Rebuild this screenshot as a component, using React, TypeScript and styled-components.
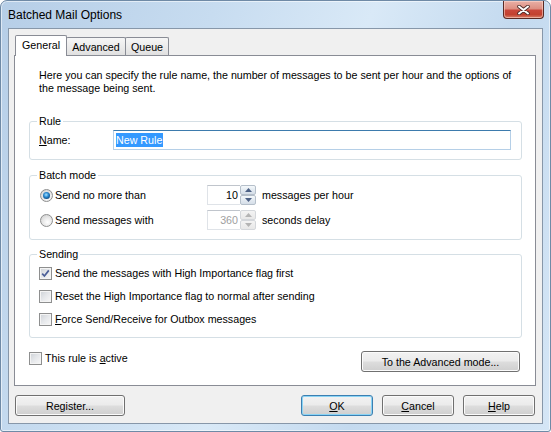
import React from "react";
import styled, { createGlobalStyle, css } from "styled-components";

const GlobalStyle = createGlobalStyle`
  html, body {
    margin: 0;
    padding: 0;
    background: #ffffff;
  }
  body {
    font-family: "Liberation Sans", Arial, sans-serif;
    font-size: 10.7px;
    color: #000000;
  }
`;

const Window = styled.div`
  box-sizing: border-box;
  width: 551px;
  height: 432px;
  display: flex;
  flex-direction: column;
  padding: 0 7px 7px 7px;
  border: 1px solid #6f8aa6;
  border-radius: 7px 7px 3px 3px;
  background: linear-gradient(
    112deg,
    #b6cee7 0%,
    #c7dcf0 30%,
    #d9e9f7 52%,
    #c4daef 72%,
    #d5e6f6 100%
  );
  box-shadow: inset 0 0 0 1px rgba(255, 255, 255, 0.55);
`;

const TitleBar = styled.div`
  height: 27px;
  display: flex;
  align-items: flex-start;
  justify-content: space-between;
`;

const Title = styled.div`
  padding-top: 7px;
  font-size: 12px;
  line-height: 14px;
  color: #000000;
`;

const CloseButton = styled.div`
  box-sizing: border-box;
  width: 41px;
  height: 18px;
  margin-right: -1px;
  display: flex;
  align-items: center;
  justify-content: center;
  border: 1px solid #5a2a24;
  border-top: none;
  border-radius: 0 0 4px 4px;
  background: linear-gradient(
    #e9b0a6 0%,
    #dd8f82 45%,
    #c9473a 55%,
    #c2412f 80%,
    #d9806a 100%
  );
  box-shadow: inset 0 0 0 1px rgba(255, 220, 210, 0.55);
`;

const Client = styled.div`
  flex: 1;
  display: flex;
  flex-direction: column;
  padding: 6px 6px 0 5px;
  border: 1px solid #8797a9;
  background: #f0f0f0;
`;

const TabStrip = styled.div`
  display: flex;
  align-items: flex-end;
  height: 20px;
  margin-left: 1px;
  position: relative;
  z-index: 1;
`;

const Tab = styled.div<{ $active?: boolean; $w: number }>`
  box-sizing: border-box;
  width: ${({ $w }) => $w}px;
  display: flex;
  align-items: center;
  justify-content: center;
  border: 1px solid #898c95;
  border-bottom: none;
  border-radius: 2px 2px 0 0;
  ${({ $active }) =>
    $active
      ? css`
          height: 21px;
          margin-bottom: -1px;
          padding-bottom: 2px;
          background: #ffffff;
          position: relative;
          z-index: 2;
        `
      : css`
          height: 18px;
          margin-left: -1px;
          background: linear-gradient(#f6f6f6 0%, #ececec 50%, #e0e0e0 100%);
        `}
`;

const Panel = styled.div`
  box-sizing: border-box;
  width: 522px;
  height: 331px;
  display: flex;
  flex-direction: column;
  padding: 13px 13px 0 14px;
  border: 1px solid #898c95;
  background: #ffffff;
`;

const Intro = styled.p`
  margin: 0 0 20px 10px;
  line-height: 13px;
`;

const Group = styled.fieldset<{ $top?: number }>`
  margin: ${({ $top = 0 }) => $top}px 0 0 0;
  padding: 0;
  min-width: 0;
  border: 1px solid #d5dfe5;
  border-radius: 3px;
`;

const Legend = styled.legend`
  margin-left: 7px;
  padding: 0 2px;
  line-height: 13px;
`;

const GroupBody = styled.div<{ $pad: string; $gap?: number }>`
  display: flex;
  flex-direction: column;
  gap: ${({ $gap = 0 }) => $gap}px;
  padding: ${({ $pad }) => $pad};
`;

const Row = styled.div<{ $h: number }>`
  display: flex;
  align-items: center;
  height: ${({ $h }) => $h}px;
`;

const FieldLabel = styled.span<{ $w: number }>`
  width: ${({ $w }) => $w}px;
  flex: none;
  display: flex;
  align-items: center;
`;

const TextBox = styled.div`
  box-sizing: border-box;
  flex: 1;
  height: 20px;
  display: flex;
  align-items: center;
  padding-left: 2px;
  border: 1px solid #b5cfe7;
  border-top-color: #3d7bad;
  background: #ffffff;
`;

const Selected = styled.span`
  background: #3399ff;
  color: #ffffff;
  line-height: 14px;
  padding: 0 1px 0 0;
`;

const Key = styled.u`
  text-decoration: underline;
  text-underline-offset: 1px;
`;

const Radio = styled.span<{ $checked?: boolean }>`
  box-sizing: border-box;
  width: 13px;
  height: 13px;
  flex: none;
  margin: 0 2px 0 1px;
  position: relative;
  border: 1px solid #8e8f8f;
  border-radius: 50%;
  background: radial-gradient(circle at 60% 65%, #ffffff 0%, #e9e9e9 45%, #c9c9c9 100%);
  ${({ $checked }) =>
    $checked &&
    css`
      &::after {
        content: "";
        position: absolute;
        left: 2px;
        top: 2px;
        width: 7px;
        height: 7px;
        border-radius: 50%;
        background: radial-gradient(
          circle at 45% 40%,
          #a9e4ff 0%,
          #2a8ad2 40%,
          #0f4a80 75%,
          #22364a 100%
        );
      }
    `}
`;

const Check = styled.span`
  box-sizing: border-box;
  width: 13px;
  height: 13px;
  flex: none;
  margin-right: 3px;
  display: flex;
  align-items: center;
  justify-content: center;
  border: 1px solid #8e8f8f;
  background: linear-gradient(135deg, #cdd1d6 0%, #e6e8eb 50%, #f8f8f8 100%);
  box-shadow: inset 0 0 0 1px #f4f4f4;
`;

const Spin = styled.div<{ $disabled?: boolean }>`
  display: flex;
  height: 20px;
  margin-right: 6px;
  color: ${({ $disabled }) => ($disabled ? "#a0a0a0" : "#000000")};
`;

const SpinField = styled.div`
  box-sizing: border-box;
  width: 33px;
  display: flex;
  align-items: center;
  justify-content: flex-end;
  padding-right: 2px;
  border: 1px solid #dfe3e8;
  border-top-color: #c0c5cc;
  border-right: none;
  background: #ffffff;
`;

const SpinButtons = styled.div`
  width: 16px;
  display: flex;
  flex-direction: column;
`;

const SpinArrow = styled.div<{ $disabled?: boolean }>`
  box-sizing: border-box;
  height: 10px;
  display: flex;
  align-items: center;
  justify-content: center;
  border: 1px solid ${({ $disabled }) => ($disabled ? "#d4d7db" : "#b5bfca")};
  border-radius: 2px;
  background: ${({ $disabled }) =>
    $disabled
      ? "linear-gradient(#f4f4f4, #e8e8e8)"
      : "linear-gradient(#f5f8fb 0%, #e3eaf1 50%, #d5dee8 100%)"};
`;

const Option = styled.label`
  display: flex;
  align-items: center;
  line-height: 13px;
`;

const BottomRow = styled.div`
  display: flex;
  justify-content: space-between;
  align-items: flex-start;
  margin-top: 13px;
`;

const ActiveOption = styled.div`
  padding-top: 1px;
`;

const Button = styled.button<{ $w: number; $default?: boolean; $mr?: number }>`
  box-sizing: border-box;
  width: ${({ $w }) => $w}px;
  height: 21px;
  margin-right: ${({ $mr = 0 }) => $mr}px;
  padding: 0;
  font-family: inherit;
  font-size: inherit;
  color: #000000;
  border: 1px solid #707070;
  border-radius: 3px;
  background: linear-gradient(#f2f2f2 0%, #ebebeb 48%, #dddddd 52%, #cfcfcf 100%);
  box-shadow: inset 0 0 0 1px #fbfbfb;
  ${({ $default }) =>
    $default &&
    css`
      border-color: #3c7fb1;
      box-shadow: inset 0 0 0 1px #8ad4f5;
    `}
`;

const Footer = styled.div`
  display: flex;
  justify-content: space-between;
  margin: 9px 1px 0 1px;
`;

const ButtonGroup = styled.div`
  display: flex;
  gap: 9px;
`;

const CloseGlyph = () => (
  <svg width="13" height="10" viewBox="0 0 13 10">
    <path d="M2 1.5 L11 8.5 M11 1.5 L2 8.5" stroke="#4a2b27" strokeWidth="3.6" strokeLinecap="round" />
    <path d="M2 1.5 L11 8.5 M11 1.5 L2 8.5" stroke="#ffffff" strokeWidth="2" strokeLinecap="round" />
  </svg>
);

const Tick = () => (
  <svg width="9" height="9" viewBox="0 0 9 9">
    <path d="M1.2 4.6 L3.4 7 L7.8 1.4" fill="none" stroke="#4b5f98" strokeWidth="1.7" />
  </svg>
);

const Triangle = ({ up, color }: { up?: boolean; color: string }) => (
  <svg width="7" height="4" viewBox="0 0 7 4">
    <path d={up ? "M0 4 L3.5 0 L7 4 Z" : "M0 0 L3.5 4 L7 0 Z"} fill={color} />
  </svg>
);

const SpinControl = ({ value, disabled }: { value: number; disabled?: boolean }) => {
  const arrow = disabled ? "#b4b4b4" : "#4d6185";
  return (
    <Spin $disabled={disabled}>
      <SpinField>{value}</SpinField>
      <SpinButtons>
        <SpinArrow $disabled={disabled}>
          <Triangle up color={arrow} />
        </SpinArrow>
        <SpinArrow $disabled={disabled}>
          <Triangle color={arrow} />
        </SpinArrow>
      </SpinButtons>
    </Spin>
  );
};

const CheckOption = ({ checked, children }: { checked?: boolean; children: React.ReactNode }) => (
  <Option>
    <Check>{checked && <Tick />}</Check>
    {children}
  </Option>
);

export default function App() {
  return (
    <>
      <GlobalStyle />
      <Window>
        <TitleBar>
          <Title>Batched Mail Options</Title>
          <CloseButton>
            <CloseGlyph />
          </CloseButton>
        </TitleBar>
        <Client>
          <TabStrip>
            <Tab $active $w={52}>
              General
            </Tab>
            <Tab $w={60}>Advanced</Tab>
            <Tab $w={44}>Queue</Tab>
          </TabStrip>
          <Panel>
            <Intro>
              Here you can specify the rule name, the number of messages to be sent per hour and the options of
              <br />
              the message being sent.
            </Intro>

            <Group>
              <Legend>Rule</Legend>
              <GroupBody $pad="2px 10px 9px 9px">
                <Row $h={20}>
                  <FieldLabel $w={74}>
                    <span>
                      <Key>N</Key>ame:
                    </span>
                  </FieldLabel>
                  <TextBox>
                    <Selected>New Rule</Selected>
                  </TextBox>
                </Row>
              </GroupBody>
            </Group>

            <Group $top={9}>
              <Legend>Batch mode</Legend>
              <GroupBody $pad="3px 10px 9px 9px" $gap={5}>
                <Row $h={20}>
                  <FieldLabel $w={168}>
                    <Radio $checked />
                    Send no more than
                  </FieldLabel>
                  <SpinControl value={10} />
                  messages per hour
                </Row>
                <Row $h={20}>
                  <FieldLabel $w={168}>
                    <Radio />
                    Send messages with
                  </FieldLabel>
                  <SpinControl value={360} disabled />
                  seconds delay
                </Row>
              </GroupBody>
            </Group>

            <Group $top={8}>
              <Legend>Sending</Legend>
              <GroupBody $pad="1px 10px 6px 9px">
                <Row $h={23}>
                  <CheckOption checked>Send the messages with High Importance flag first</CheckOption>
                </Row>
                <Row $h={23}>
                  <CheckOption>Reset the High Importance flag to normal after sending</CheckOption>
                </Row>
                <Row $h={23}>
                  <CheckOption>
                    <span>
                      <Key>F</Key>orce Send/Receive for Outbox messages
                    </span>
                  </CheckOption>
                </Row>
              </GroupBody>
            </Group>

            <BottomRow>
              <ActiveOption>
                <CheckOption>
                  <span>
                    This rule is <Key>a</Key>ctive
                  </span>
                </CheckOption>
              </ActiveOption>
              <Button $w={159} $mr={2}>
                To the Advanced mode...
              </Button>
            </BottomRow>
          </Panel>

          <Footer>
            <Button $w={110}>Register...</Button>
            <ButtonGroup>
              <Button $w={72} $default>
                <Key>O</Key>K
              </Button>
              <Button $w={72}>
                <Key>C</Key>ancel
              </Button>
              <Button $w={72}>
                <Key>H</Key>elp
              </Button>
            </ButtonGroup>
          </Footer>
        </Client>
      </Window>
    </>
  );
}
